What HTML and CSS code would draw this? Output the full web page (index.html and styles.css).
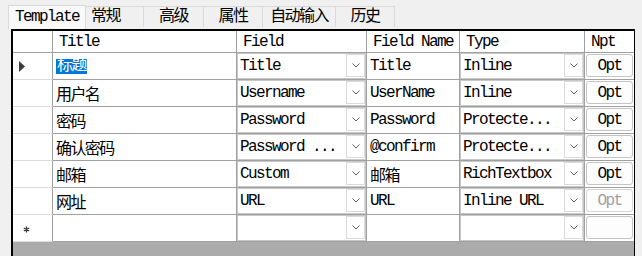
FILE: index.html
```html
<!DOCTYPE html>
<html lang="zh">
<head>
    <meta charset="UTF-8">
    <title>Template</title>
    <link rel="stylesheet" href="styles.css">
</head>
<body>

    <div class="tabs">
        <div class="tab active">Template</div>
        <div class="tab t-general">常规</div>
        <div class="tab t-adv">高级</div>
        <div class="tab t-prop">属性</div>
        <div class="tab t-auto">自动输入</div>
        <div class="tab t-hist">历史</div>
    </div>

    <div class="grid">
        <div class="row head">
            <div class="cell rh"></div>
            <div class="cell">Title</div>
            <div class="cell">Field</div>
            <div class="cell">Field Name</div>
            <div class="cell">Type</div>
            <div class="cell">Npt</div>
        </div>

        <div class="row">
            <div class="cell rh">
                <svg class="arrow" width="7" height="11" viewBox="0 0 7 11"><polygon points="0,0 6,5.5 0,11" fill="#3c3c3c"/></svg>
            </div>
            <div class="cell txt"><span class="sel">标题</span></div>
            <div class="cell"><div class="combo"><span class="val">Title</span><span class="drop"><svg width="8" height="5" viewBox="0 0 8 5"><polyline points="0.5,0.5 4,4 7.5,0.5" fill="none" stroke="#606060"/></svg></span></div></div>
            <div class="cell txt">Title</div>
            <div class="cell"><div class="combo"><span class="val">Inline</span><span class="drop"><svg width="8" height="5" viewBox="0 0 8 5"><polyline points="0.5,0.5 4,4 7.5,0.5" fill="none" stroke="#606060"/></svg></span></div></div>
            <div class="cell"><button class="opt">Opt</button></div>
        </div>

        <div class="row">
            <div class="cell rh"></div>
            <div class="cell txt">用户名</div>
            <div class="cell"><div class="combo"><span class="val">Username</span><span class="drop"><svg width="8" height="5" viewBox="0 0 8 5"><polyline points="0.5,0.5 4,4 7.5,0.5" fill="none" stroke="#606060"/></svg></span></div></div>
            <div class="cell txt">UserName</div>
            <div class="cell"><div class="combo"><span class="val">Inline</span><span class="drop"><svg width="8" height="5" viewBox="0 0 8 5"><polyline points="0.5,0.5 4,4 7.5,0.5" fill="none" stroke="#606060"/></svg></span></div></div>
            <div class="cell"><button class="opt">Opt</button></div>
        </div>

        <div class="row">
            <div class="cell rh"></div>
            <div class="cell txt">密码</div>
            <div class="cell"><div class="combo"><span class="val">Password</span><span class="drop"><svg width="8" height="5" viewBox="0 0 8 5"><polyline points="0.5,0.5 4,4 7.5,0.5" fill="none" stroke="#606060"/></svg></span></div></div>
            <div class="cell txt">Password</div>
            <div class="cell"><div class="combo"><span class="val">Protecte...</span><span class="drop"><svg width="8" height="5" viewBox="0 0 8 5"><polyline points="0.5,0.5 4,4 7.5,0.5" fill="none" stroke="#606060"/></svg></span></div></div>
            <div class="cell"><button class="opt">Opt</button></div>
        </div>

        <div class="row">
            <div class="cell rh"></div>
            <div class="cell txt">确认密码</div>
            <div class="cell"><div class="combo"><span class="val">Password ...</span><span class="drop"><svg width="8" height="5" viewBox="0 0 8 5"><polyline points="0.5,0.5 4,4 7.5,0.5" fill="none" stroke="#606060"/></svg></span></div></div>
            <div class="cell txt">@confirm</div>
            <div class="cell"><div class="combo"><span class="val">Protecte...</span><span class="drop"><svg width="8" height="5" viewBox="0 0 8 5"><polyline points="0.5,0.5 4,4 7.5,0.5" fill="none" stroke="#606060"/></svg></span></div></div>
            <div class="cell"><button class="opt">Opt</button></div>
        </div>

        <div class="row">
            <div class="cell rh"></div>
            <div class="cell txt">邮箱</div>
            <div class="cell"><div class="combo"><span class="val">Custom</span><span class="drop"><svg width="8" height="5" viewBox="0 0 8 5"><polyline points="0.5,0.5 4,4 7.5,0.5" fill="none" stroke="#606060"/></svg></span></div></div>
            <div class="cell txt">邮箱</div>
            <div class="cell"><div class="combo"><span class="val">RichTextbox</span><span class="drop"><svg width="8" height="5" viewBox="0 0 8 5"><polyline points="0.5,0.5 4,4 7.5,0.5" fill="none" stroke="#606060"/></svg></span></div></div>
            <div class="cell"><button class="opt">Opt</button></div>
        </div>

        <div class="row">
            <div class="cell rh"></div>
            <div class="cell txt">网址</div>
            <div class="cell"><div class="combo"><span class="val">URL</span><span class="drop"><svg width="8" height="5" viewBox="0 0 8 5"><polyline points="0.5,0.5 4,4 7.5,0.5" fill="none" stroke="#606060"/></svg></span></div></div>
            <div class="cell txt">URL</div>
            <div class="cell"><div class="combo"><span class="val">Inline URL</span><span class="drop"><svg width="8" height="5" viewBox="0 0 8 5"><polyline points="0.5,0.5 4,4 7.5,0.5" fill="none" stroke="#606060"/></svg></span></div></div>
            <div class="cell"><button class="opt disabled">Opt</button></div>
        </div>

        <div class="row">
            <div class="cell rh">
                <svg class="star" width="7" height="7" viewBox="0 0 7 7"><path d="M3.5 0.5v6M0.8 2l5.4 3M0.8 5l5.4-3" stroke="#3c3c3c" stroke-width="1.3"/></svg>
            </div>
            <div class="cell txt"></div>
            <div class="cell"><div class="combo"><span class="val"></span><span class="drop"><svg width="8" height="5" viewBox="0 0 8 5"><polyline points="0.5,0.5 4,4 7.5,0.5" fill="none" stroke="#606060"/></svg></span></div></div>
            <div class="cell txt"></div>
            <div class="cell"><div class="combo"><span class="val"></span><span class="drop"><svg width="8" height="5" viewBox="0 0 8 5"><polyline points="0.5,0.5 4,4 7.5,0.5" fill="none" stroke="#606060"/></svg></span></div></div>
            <div class="cell"><button class="opt"></button></div>
        </div>
    </div>

</body>
</html>
```

FILE: styles.css
```css
body {
    margin: 0;
    background: #f0f0f0;
    font-family: 'Liberation Mono', 'Noto Sans CJK SC', monospace;
    font-size: 16px;
    letter-spacing: -1.6px;
    color: #000;
    overflow: hidden;
    height: 256px;
}
.tabs {
    display: flex;
    align-items: flex-end;
    height: 29px;
    padding-left: 8px;
    box-sizing: border-box;
}
.tab {
    height: 21px;
    line-height: 20px;
    margin-bottom: 2px;
    border: 1px solid #d9d9d9;
    border-left: none;
    border-bottom: none;
    box-sizing: border-box;
    text-align: center;
    white-space: nowrap;
}
.tab.active {
    height: 24px;
    line-height: 22px;
    margin-bottom: 0;
    width: 78px;
    background: #f9f9f9;
    border-left: 1px solid #d9d9d9;
    padding-bottom: 2px;
}
.t-general {
    width: 58px;
    text-align: left;
    padding-left: 5px;
}
.t-adv { width: 60px; }
.t-prop { width: 59px; }
.t-auto { width: 73px; }
.t-hist { width: 59px; }

.grid {
    margin-left: 11px;
    width: 624px;
    height: 227px;
    border: 2px solid #000;
    border-right-width: 1px;
    border-bottom: none;
    box-sizing: border-box;
    background: #ababab;
}
.row {
    display: grid;
    grid-template-columns: 40px 184px 130px 93px 125px 49px;
    height: 27px;
    background: #fff;
}
.row.head {
    height: 22px;
}
.cell {
    box-sizing: border-box;
    border-right: 1px solid #a0a0a0;
    border-bottom: 1px solid #a0a0a0;
    display: flex;
    align-items: center;
    white-space: nowrap;
    overflow: hidden;
}
.cell:last-child {
    border-right: none;
}
.head .cell {
    padding-left: 6px;
}
.rh {
    border-bottom-color: #dcdcdc;
}
.head .rh {
    border-bottom-color: #a0a0a0;
}
.arrow {
    margin-left: 6px;
}
.star {
    margin-left: 10px;
    margin-top: 2px;
}
.txt {
    padding-left: 3px;
}
.sel {
    background: #0078d7;
    color: #fff;
    line-height: 15px;
    padding: 0 1px;
}
.combo {
    display: flex;
    align-items: stretch;
    width: 100%;
    height: 100%;
    box-sizing: border-box;
    border: 1px solid #c8c8c8;
    background: #fff;
}
.val {
    flex: 1;
    display: flex;
    align-items: center;
    padding-left: 2px;
    overflow: hidden;
}
.drop {
    width: 19px;
    margin-bottom: 1px;
    box-sizing: border-box;
    border: 1px solid #dadada;
    display: flex;
    align-items: center;
    justify-content: center;
}
.opt {
    width: 47px;
    height: 23px;
    margin: 0 0 1px 1px;
    box-sizing: border-box;
    border: 1px solid #c4c4c4;
    border-radius: 3px;
    background: #fdfdfd;
    font: inherit;
    letter-spacing: inherit;
    color: #000;
    padding: 0;
}
.opt.disabled {
    color: #a0a0a0;
    border-color: #d6d6d6;
}
```
